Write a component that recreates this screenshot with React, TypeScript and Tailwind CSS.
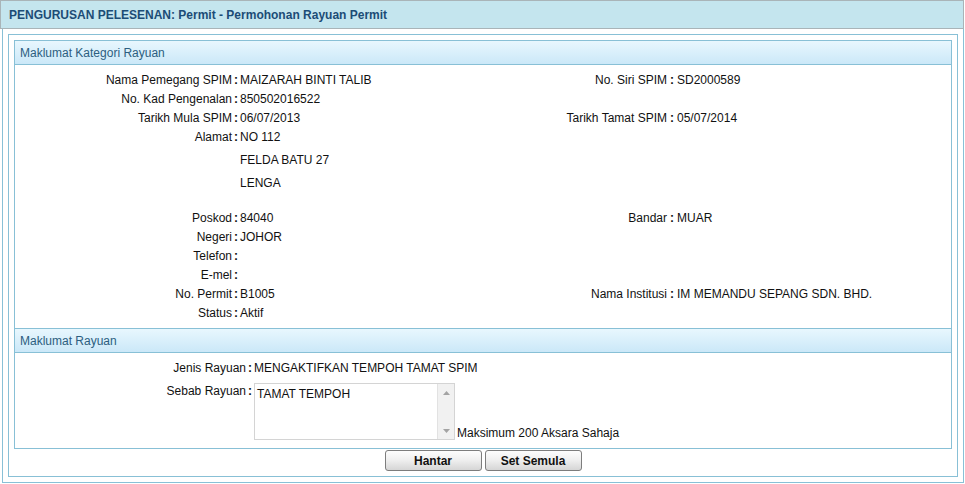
import React from 'react';

const Field = ({
  label,
  value,
  labelW,
  valueW,
  colonW = 'w-[8px] pl-[2px]',
}: {
  label: string;
  value?: React.ReactNode;
  labelW: string;
  valueW?: string;
  colonW?: string;
}) => (
  <div className="flex">
    <div className={`${labelW} text-right`}>{label}</div>
    <div className={`${colonW} font-bold`}>:</div>
    <div className={valueW || ''}>{value}</div>
  </div>
);

const Row = ({
  l,
  lv,
  r,
  rv,
}: {
  l: string;
  lv?: string;
  r?: string;
  rv?: string;
}) => (
  <div className="flex h-[19px] items-center">
    <Field label={l} value={lv} labelW="w-[217px]" valueW="w-[267px]" />
    {r && (
      <Field label={r} value={rv} labelW="w-[160px]" colonW="w-[10px] pl-[3px]" />
    )}
  </div>
);

const SectionHeader = ({ title, top }: { title: string; top?: boolean }) => (
  <div
    className={`h-[24px] flex items-center pl-[5px] border-b border-[#88c0d6] bg-gradient-to-b from-[#e8f7fe] to-[#cbe8f8] text-[#2c5e80] ${
      top ? 'border-t h-[25px]' : ''
    }`}
  >
    {title}
  </div>
);

export default function App() {
  return (
    <div className="w-[965px] h-[484px] bg-white text-[12px] leading-[14px] text-[#111] font-['Liberation_Sans',Arial,sans-serif]">
      <div className="w-[964px] h-[29px] bg-[#c4e5ee] border border-[#a9b4b8] flex items-center pl-[8px] font-bold text-[#1c4c76]">
        PENGURUSAN PELESENAN: Permit - Permohonan Rayuan Permit
      </div>
      <div className="ml-[2px] w-[962px] h-[454px] border-x border-b border-[#88c0d6] px-[5px] pt-[5px]">
        <div className="h-[443px] border border-[#88c0d6] px-[5px] pt-[5px]">
          <div className="h-[409px] border border-[#88c0d6] flex flex-col">
            <SectionHeader title="Maklumat Kategori Rayuan" />
            <div className="pt-[5px] h-[263px]">
              <Row l="Nama Pemegang SPIM" lv="MAIZARAH BINTI TALIB" r="No. Siri SPIM" rv="SD2000589" />
              <Row l="No. Kad Pengenalan" lv="850502016522" />
              <Row l="Tarikh Mula SPIM" lv="06/07/2013" r="Tarikh Tamat SPIM" rv="05/07/2014" />
              <div className="flex">
                <div className="w-[217px] text-right h-[19px] flex items-center justify-end">Alamat</div>
                <div className="w-[8px] pl-[2px] font-bold h-[19px] flex items-center">:</div>
                <div className="flex flex-col gap-[4px]">
                  <div className="h-[19px] flex items-center">NO 112</div>
                  <div className="h-[19px] flex items-center">FELDA BATU 27</div>
                  <div className="h-[19px] flex items-center">LENGA</div>
                </div>
              </div>
              <div className="h-[16px]" />
              <Row l="Poskod" lv="84040" r="Bandar" rv="MUAR" />
              <Row l="Negeri" lv="JOHOR" />
              <Row l="Telefon" />
              <Row l="E-mel" />
              <Row l="No. Permit" lv="B1005" r="Nama Institusi" rv="IM MEMANDU SEPANG SDN. BHD." />
              <Row l="Status" lv="Aktif" />
            </div>
            <SectionHeader title="Maklumat Rayuan" top />
            <div className="pt-[5px]">
              <div className="h-[19px] flex items-center">
                <Field label="Jenis Rayuan" value="MENGAKTIFKAN TEMPOH TAMAT SPIM" labelW="w-[231px]" />
              </div>
              <div className="flex mt-[6px] items-end">
                <div className="flex self-start">
                  <div className="w-[231px] text-right leading-[17px]">Sebab Rayuan</div>
                  <div className="w-[8px] pl-[2px] font-bold leading-[17px]">:</div>
                </div>
                <div className="w-[201px] h-[57px] border border-[#d4d4d4] flex">
                  <div className="flex-1 pl-[2px] pt-[3px]">TAMAT TEMPOH</div>
                  <div className="w-[17px] bg-[#f1f1f1] border-l border-[#e2e2e2] flex flex-col items-center justify-between pt-[7px] pb-[6px]">
                    <svg width="7" height="4" viewBox="0 0 7 4">
                      <path d="M0 4 L3.5 0 L7 4 Z" fill="#a3a3a3" />
                    </svg>
                    <svg width="7" height="4" viewBox="0 0 7 4">
                      <path d="M0 0 L3.5 4 L7 0 Z" fill="#a3a3a3" />
                    </svg>
                  </div>
                </div>
                <div className="ml-[2px]">Maksimum 200 Aksara Sahaja</div>
              </div>
            </div>
          </div>
          <div className="flex justify-center gap-[3px] mt-[1px]">
            {['Hantar', 'Set Semula'].map((b) => (
              <button
                key={b}
                className="w-[97px] h-[21px] border border-[#7d7d7d] rounded-[3px] bg-gradient-to-b from-[#fdfdfd] via-[#eeeeee] to-[#d6d6d6] font-bold text-[12px] text-[#111]"
              >
                {b}
              </button>
            ))}
          </div>
        </div>
      </div>
    </div>
  );
}
